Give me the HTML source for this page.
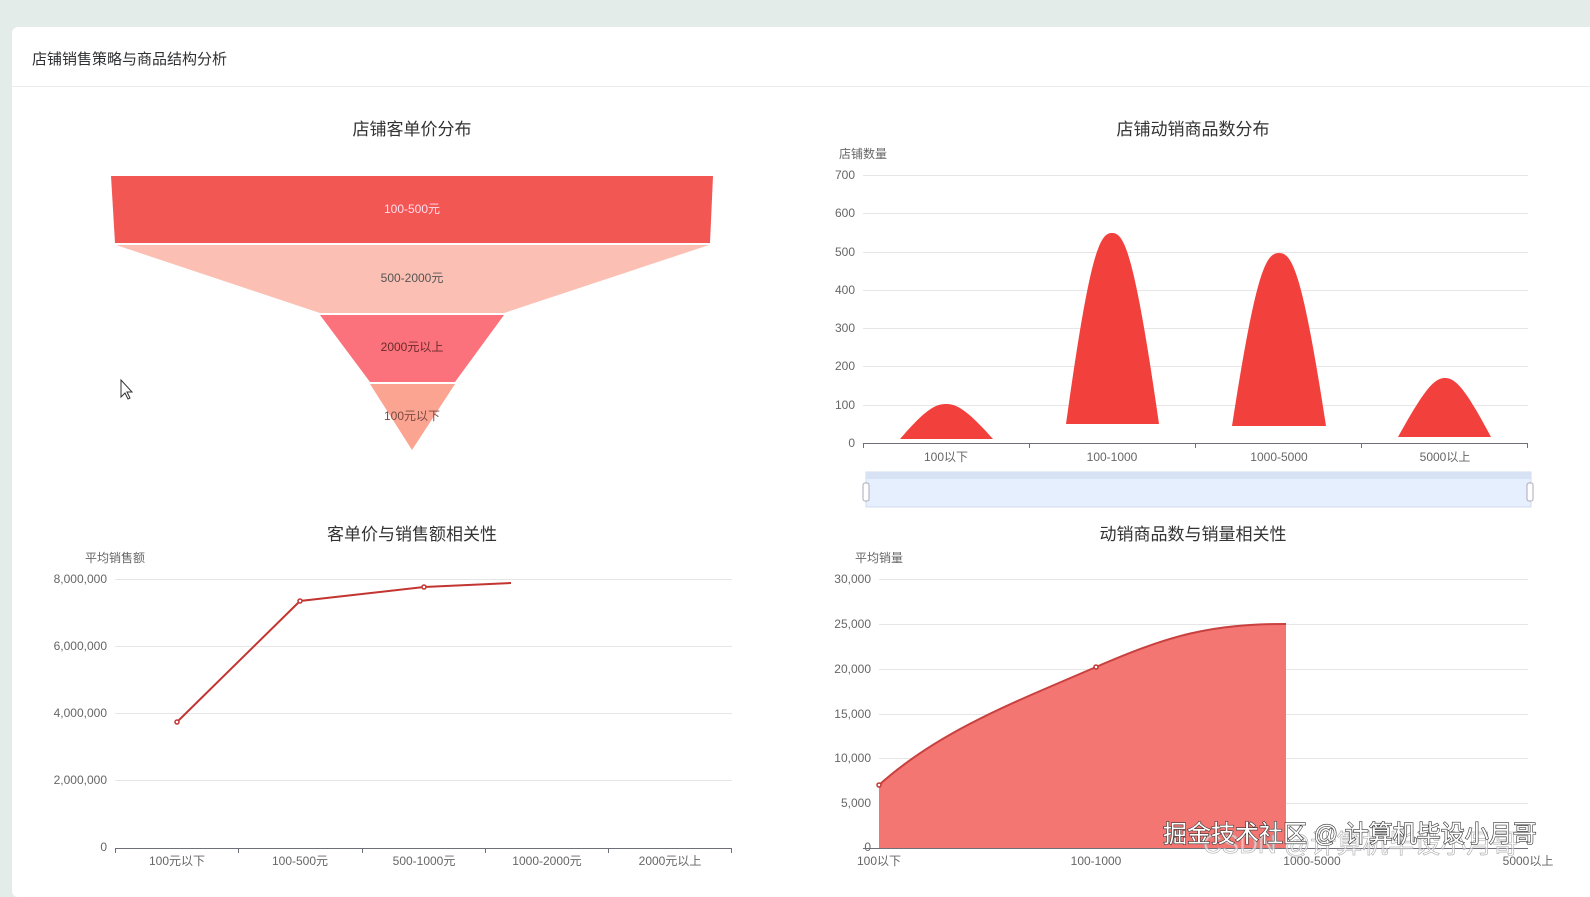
<!DOCTYPE html>
<html><head><meta charset="utf-8"><style>
body{margin:0;width:1590px;height:883px;background:#e4ecea;font-family:"Liberation Sans","Noto Sans CJK SC",sans-serif;overflow:hidden;position:relative}
.card{position:absolute;left:12px;top:27px;width:1590px;height:870px;background:#fff;border-radius:6px}
.hd{position:absolute;left:12px;top:27px;width:1578px;height:59px;border-bottom:1px solid #e8ecec}
.hd span{position:absolute;left:20px;top:21px;font-size:15px;color:#303133}
svg{position:absolute;left:0;top:0}
svg text{font-family:"Liberation Sans","Noto Sans CJK SC",sans-serif}
</style></head><body>
<div class="card"></div>
<div class="hd"><span>店铺销售策略与商品结构分析</span></div>
<svg width="1590" height="883" viewBox="0 0 1590 883">
<g font-size="17" fill="#333" text-anchor="middle">
<text x="412" y="135">店铺客单价分布</text>
<text x="1193" y="135">店铺动销商品数分布</text>
<text x="412" y="540">客单价与销售额相关性</text>
<text x="1193" y="540">动销商品数与销量相关性</text>
</g>
<!-- funnel -->
<polygon points="111,176 713,176 710,243 115,243" fill="#f35754"/>
<polygon points="116,245 709,245 504,313 320,313" fill="#fbbfb3"/>
<polygon points="320,315 504,315 455,382 370,382" fill="#fb727c"/>
<polygon points="370,384 455,384 412,450" fill="#fba491"/>
<g font-size="12" text-anchor="middle">
<text x="412" y="213" fill="#fde">100-500元</text>
<text x="412" y="282" fill="#555">500-2000元</text>
<text x="412" y="351" fill="#6b2a2a">2000元以上</text>
<text x="412" y="420" fill="#7a4a40">100元以下</text>
</g>
<path d="M121 380 v17 l4-4 l3 6 l2-1 l-3-6 h5 z" fill="#fff" stroke="#333" stroke-width="1"/>
<!-- top right bar chart -->
<g stroke="#e6e6e6" stroke-width="1">
<line x1="863" x2="1528" y1="175.5" y2="175.5"/><line x1="863" x2="1528" y1="213.5" y2="213.5"/>
<line x1="863" x2="1528" y1="252.5" y2="252.5"/><line x1="863" x2="1528" y1="290.5" y2="290.5"/>
<line x1="863" x2="1528" y1="328.5" y2="328.5"/><line x1="863" x2="1528" y1="366.5" y2="366.5"/>
<line x1="863" x2="1528" y1="405.5" y2="405.5"/>
</g>
<line x1="863" x2="1528" y1="443.5" y2="443.5" stroke="#6e7079"/>
<g stroke="#6e7079"><line x1="863.5" x2="863.5" y1="443" y2="448"/><line x1="1029.5" x2="1029.5" y1="443" y2="448"/><line x1="1195.5" x2="1195.5" y1="443" y2="448"/><line x1="1361.5" x2="1361.5" y1="443" y2="448"/><line x1="1527.5" x2="1527.5" y1="443" y2="448"/></g>
<g font-size="12" fill="#666" text-anchor="end">
<text x="855" y="179">700</text><text x="855" y="217">600</text><text x="855" y="256">500</text><text x="855" y="294">400</text><text x="855" y="332">300</text><text x="855" y="370">200</text><text x="855" y="409">100</text><text x="855" y="447">0</text>
</g>
<text x="839" y="158" font-size="12" fill="#666">店铺数量</text>
<g font-size="12" fill="#666" text-anchor="middle">
<text x="946" y="461">100以下</text><text x="1112" y="461">100-1000</text><text x="1279" y="461">1000-5000</text><text x="1445" y="461">5000以上</text>
</g>
<g fill="#f2403d">
<path d="M900 439 C925 410 935 404 946 404 C957 404 967 410 993 439 Z"/>
<path d="M1066 424 C1090 250 1100 233 1112 233 C1124 233 1134 250 1159 424 Z"/>
<path d="M1232 426 C1256 270 1266 253 1279 253 C1292 253 1302 270 1326 426 Z"/>
<path d="M1398 437 C1424 390 1434 378 1445 378 C1456 378 1466 390 1491 437 Z"/>
</g>
<rect x="866" y="472" width="665" height="35" fill="#e6effd" stroke="#d2dbee"/>
<rect x="866" y="472" width="665" height="7" fill="#d8e2f5"/>
<rect x="863" y="483" width="6" height="18" rx="2" fill="#fff" stroke="#aab"/>
<rect x="1527" y="483" width="6" height="18" rx="2" fill="#fff" stroke="#aab"/>
<!-- bottom left line chart -->
<g stroke="#e6e6e6"><line x1="115" x2="732" y1="579.5" y2="579.5"/><line x1="115" x2="732" y1="646.5" y2="646.5"/><line x1="115" x2="732" y1="713.5" y2="713.5"/><line x1="115" x2="732" y1="780.5" y2="780.5"/></g>
<line x1="115" x2="732" y1="848.5" y2="848.5" stroke="#6e7079"/>
<g stroke="#6e7079"><line x1="115.5" x2="115.5" y1="848" y2="853"/><line x1="238.5" x2="238.5" y1="848" y2="853"/><line x1="362.5" x2="362.5" y1="848" y2="853"/><line x1="485.5" x2="485.5" y1="848" y2="853"/><line x1="608.5" x2="608.5" y1="848" y2="853"/><line x1="731.5" x2="731.5" y1="848" y2="853"/></g>
<text x="85" y="562" font-size="12" fill="#666">平均销售额</text>
<g font-size="12" fill="#666" text-anchor="end">
<text x="107" y="583">8,000,000</text><text x="107" y="650">6,000,000</text><text x="107" y="717">4,000,000</text><text x="107" y="784">2,000,000</text><text x="107" y="851">0</text>
</g>
<g font-size="12" fill="#666" text-anchor="middle">
<text x="177" y="865">100元以下</text><text x="300" y="865">100-500元</text><text x="424" y="865">500-1000元</text><text x="547" y="865">1000-2000元</text><text x="670" y="865">2000元以上</text>
</g>
<polyline points="177,722 300,601 424,587 511,583" fill="none" stroke="#c23531" stroke-width="2"/>
<g fill="#fff" stroke="#c23531" stroke-width="1.5"><circle cx="177" cy="722" r="2"/><circle cx="300" cy="601" r="2"/><circle cx="424" cy="587" r="2"/></g>
<!-- bottom right area chart -->
<g stroke="#e6e6e6"><line x1="879" x2="1528" y1="579.5" y2="579.5"/><line x1="879" x2="1528" y1="624.5" y2="624.5"/><line x1="879" x2="1528" y1="669.5" y2="669.5"/><line x1="879" x2="1528" y1="714.5" y2="714.5"/><line x1="879" x2="1528" y1="758.5" y2="758.5"/><line x1="879" x2="1528" y1="803.5" y2="803.5"/></g>
<text x="855" y="562" font-size="12" fill="#666">平均销量</text>
<g font-size="12" fill="#666" text-anchor="end">
<text x="871" y="583">30,000</text><text x="871" y="628">25,000</text><text x="871" y="673">20,000</text><text x="871" y="718">15,000</text><text x="871" y="762">10,000</text><text x="871" y="807">5,000</text><text x="871" y="851">0</text>
</g>
<path d="M879 785 C940 730 1020 700 1096 667 C1170 635 1210 624 1286 624 L1286 848 L879 848 Z" fill="#f47673"/>
<path d="M879 785 C940 730 1020 700 1096 667 C1170 635 1210 624 1286 624" fill="none" stroke="#c8413e" stroke-width="2"/>
<g fill="#fff" stroke="#c23531" stroke-width="1.5"><circle cx="879" cy="785" r="2"/><circle cx="1096" cy="667" r="2"/></g>
<line x1="863" x2="1528" y1="848.5" y2="848.5" stroke="#6e7079"/>
<g font-size="12" fill="#666" text-anchor="middle">
<text x="879" y="865">100以下</text><text x="1096" y="865">100-1000</text><text x="1312" y="865">1000-5000</text><text x="1528" y="865">5000以上</text>
</g>
<text x="1203" y="853" font-size="26" fill="#fff" fill-opacity="0.5" stroke="#aaa" stroke-width="0.6">CSDN @计算机毕设小月哥</text>
<text x="1163" y="842" font-size="24" fill="#fff" stroke="#333" stroke-width="1.2" paint-order="stroke">掘金技术社区 @ 计算机毕设小月哥</text>
</svg>
</body></html>
